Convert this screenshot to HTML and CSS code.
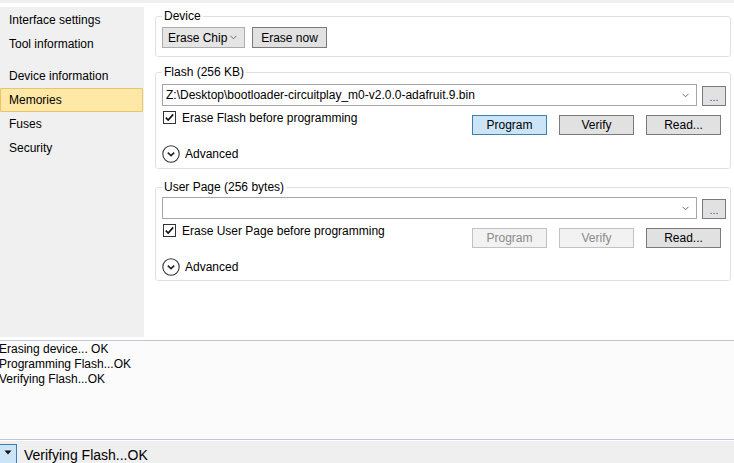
FILE: index.html
```html
<!DOCTYPE html>
<html lang="en">
<head>
  <meta charset="UTF-8">
  <title>Device Programming - Memories</title>
  <link rel="stylesheet" href="styles.css">
</head>
<body>
  <div class="window">
    <div class="top-strip"></div>

    <div class="workspace">
      <nav class="sidebar">
        <div class="nav-item">Interface settings</div>
        <div class="nav-item">Tool information</div>
        <div class="nav-item nav-gap">Device information</div>
        <div class="nav-item active">Memories</div>
        <div class="nav-item">Fuses</div>
        <div class="nav-item">Security</div>
      </nav>

      <main class="content">
        <fieldset class="group group-device">
          <legend>Device</legend>
          <div class="device-row">
            <div class="select select-chip">
              <span>Erase Chip</span>
              <svg class="chevron" width="7" height="5" viewBox="0 0 7 5"><path d="M0.5 0.8 L3.5 3.8 L6.5 0.8" fill="none" stroke="#6d6d6d" stroke-width="1"/></svg>
            </div>
            <button class="btn btn-dark btn-erase">Erase now</button>
          </div>
        </fieldset>

        <fieldset class="group group-flash">
          <legend>Flash (256 KB)</legend>
          <div class="file-row">
            <div class="file-input">
              <span>Z:\Desktop\bootloader-circuitplay_m0-v2.0.0-adafruit.9.bin</span>
              <svg class="chevron" width="7" height="5" viewBox="0 0 7 5"><path d="M0.5 0.8 L3.5 3.8 L6.5 0.8" fill="none" stroke="#6d6d6d" stroke-width="1"/></svg>
            </div>
            <button class="btn btn-dark btn-browse">...</button>
          </div>
          <div class="action-row">
            <label class="check">
              <span class="check-box"><svg width="11" height="11" viewBox="0 0 11 11"><path d="M1.8 5.6 L4.2 8 L9.2 2.4" fill="none" stroke="#111" stroke-width="1.6"/></svg></span>
              Erase Flash before programming
            </label>
            <div class="actions">
              <button class="btn btn-focus">Program</button>
              <button class="btn btn-dark">Verify</button>
              <button class="btn btn-dark">Read...</button>
            </div>
          </div>
          <div class="advanced">
            <svg width="18" height="18" viewBox="0 0 18 18"><circle cx="9" cy="9" r="8.2" fill="none" stroke="#333" stroke-width="1.1"/><path d="M5.8 7.6 L9 10.6 L12.2 7.6" fill="none" stroke="#222" stroke-width="1.6"/></svg>
            <span>Advanced</span>
          </div>
        </fieldset>

        <fieldset class="group group-user">
          <legend>User Page (256 bytes)</legend>
          <div class="file-row">
            <div class="file-input">
              <span></span>
              <svg class="chevron" width="7" height="5" viewBox="0 0 7 5"><path d="M0.5 0.8 L3.5 3.8 L6.5 0.8" fill="none" stroke="#6d6d6d" stroke-width="1"/></svg>
            </div>
            <button class="btn btn-dark btn-browse">...</button>
          </div>
          <div class="action-row">
            <label class="check">
              <span class="check-box"><svg width="11" height="11" viewBox="0 0 11 11"><path d="M1.8 5.6 L4.2 8 L9.2 2.4" fill="none" stroke="#111" stroke-width="1.6"/></svg></span>
              Erase User Page before programming
            </label>
            <div class="actions">
              <button class="btn" disabled>Program</button>
              <button class="btn" disabled>Verify</button>
              <button class="btn btn-dark">Read...</button>
            </div>
          </div>
          <div class="advanced">
            <svg width="18" height="18" viewBox="0 0 18 18"><circle cx="9" cy="9" r="8.2" fill="none" stroke="#333" stroke-width="1.1"/><path d="M5.8 7.6 L9 10.6 L12.2 7.6" fill="none" stroke="#222" stroke-width="1.6"/></svg>
            <span>Advanced</span>
          </div>
        </fieldset>
      </main>
    </div>

    <div class="log">
      <div class="log-line">Erasing device... OK</div>
      <div class="log-line">Programming Flash...OK</div>
      <div class="log-line">Verifying Flash...OK</div>
    </div>

    <div class="statusbar">
      <button class="status-toggle">
        <svg width="8" height="5" viewBox="0 0 8 5"><path d="M0.5 0.5 L7.5 0.5 L4 4.5 Z" fill="#111"/></svg>
      </button>
      <span class="status-text">Verifying Flash...OK</span>
    </div>
  </div>
</body>
</html>
```

FILE: styles.css
```css
/* Global */
* {
  box-sizing: border-box;
}

body {
  margin: 0;
  font-family: "Segoe UI", "Liberation Sans", Arial, sans-serif;
  font-size: 12px;
  color: #000;
  background-color: #fff;
}

.window {
  width: 734px;
  height: 463px;
  display: flex;
  flex-direction: column;
  overflow: hidden;
}

.top-strip {
  height: 3px;
  flex-shrink: 0;
  background-color: #efefef;
}

.workspace {
  display: flex;
  height: 337px;
  flex-shrink: 0;
}

/* Sidebar */
.sidebar {
  width: 144px;
  height: 330px;
  margin-top: 4px;
  padding-top: 1px;
  background-color: #f0f0f0;
  flex-shrink: 0;
}

.nav-item {
  width: 143px;
  height: 24px;
  line-height: 22px;
  padding-left: 8px;
  border: 1px solid transparent;
  border-radius: 1px;
  white-space: nowrap;
}

.nav-gap {
  margin-top: 8px;
}

.nav-item.active {
  background-color: #ffe8a6;
  border-color: #e6c56c;
}

/* Main content */
.content {
  flex: 1;
  padding: 5px 3px 0 11px;
}

.group {
  margin: 0;
  padding: 3px 4px 0 6px;
  border: 1px solid #e2e2e2;
  border-radius: 3px;
  min-width: 0;
}

.group legend {
  padding: 0 2px;
  line-height: 16px;
}

.group-device {
  padding-bottom: 8px;
}

.group-flash {
  margin-top: 7px;
  padding-top: 4px;
  padding-bottom: 5px;
}

.group-user {
  margin-top: 10px;
  padding-top: 2px;
  padding-bottom: 4px;
}

.device-row {
  display: flex;
  gap: 7px;
}

.select {
  display: flex;
  align-items: center;
  justify-content: space-between;
  height: 21px;
  padding: 0 7px 0 6px;
  background-color: #e5e5e5;
  border: 1px solid #acacac;
}

.select-chip {
  width: 83px;
  padding-left: 5px;
}

.btn {
  height: 20px;
  padding: 0;
  font-family: inherit;
  font-size: 12px;
  color: #000;
  background-color: #e1e1e1;
  border: 1px solid #adadad;
  border-radius: 0;
}

.btn-dark {
  border-color: #7a7a7a;
}

.btn-erase {
  width: 75px;
  height: 21px;
}

.btn-focus {
  background-color: #cce4f7;
  border-color: #3d80b3;
}

.btn[disabled] {
  background-color: #f2f2f2;
  border-color: #c2c2c2;
  color: #8a8a8a;
}

.file-row {
  display: flex;
  align-items: flex-start;
  gap: 5px;
}

.file-input {
  flex: 1;
  display: flex;
  align-items: center;
  justify-content: space-between;
  height: 22px;
  padding: 0 7px 0 3px;
  background-color: #fff;
  border: 1px solid #a6a6a6;
  white-space: nowrap;
}

.btn-browse {
  width: 24px;
  height: 20px;
  margin-top: 2px;
  font-size: 11px;
  line-height: 20px;
  color: #3a5a8a;
}

.action-row {
  display: flex;
  justify-content: space-between;
  align-items: flex-start;
}

.check {
  display: flex;
  align-items: center;
  gap: 6px;
  margin-top: 5px;
  margin-left: 1px;
  height: 13px;
}

.check-box {
  width: 13px;
  height: 13px;
  border: 1px solid #333;
  background-color: #fff;
  display: flex;
  align-items: center;
  justify-content: center;
}

.actions {
  display: flex;
  gap: 12px;
  margin-top: 9px;
  margin-right: 5px;
}

.actions .btn {
  width: 75px;
}

.advanced {
  display: flex;
  align-items: center;
  gap: 5px;
  height: 18px;
  margin-top: 10px;
}

/* Log */
.log {
  height: 100px;
  flex-shrink: 0;
  padding-top: 1px;
  background-color: #fbfbfb;
  border-top: 1px solid #bcc8d9;
  border-bottom: 1px solid #bcc8d9;
}

.log-line {
  line-height: 15px;
  margin-left: -1px;
  white-space: nowrap;
}

/* Status bar */
.statusbar {
  flex: 1;
  min-height: 0;
  display: flex;
  align-items: flex-start;
  gap: 7px;
  margin-top: 1px;
  padding-top: 3px;
  background-color: #efefef;
}

.status-toggle {
  width: 17px;
  height: 19px;
  padding: 5px 0 0;
  display: flex;
  justify-content: center;
  background-color: #cce4f7;
  border: 1px solid #3d80b3;
  border-left: none;
  border-bottom: none;
}

.status-text {
  margin-top: 3px;
  font-size: 14px;
  line-height: 16px;
  white-space: nowrap;
}
```
